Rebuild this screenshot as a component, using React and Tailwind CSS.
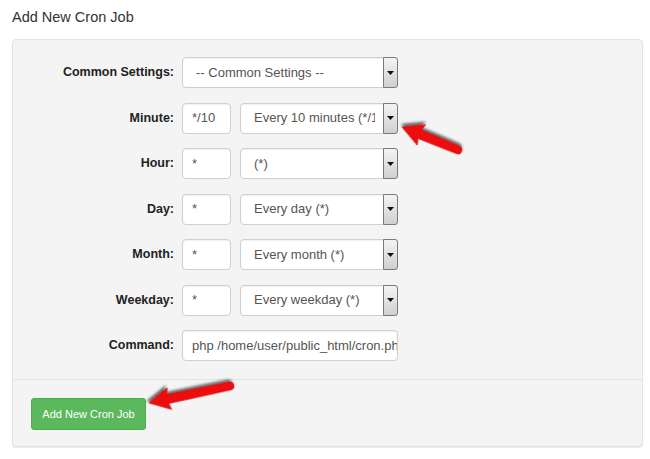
const rows = [
  { label: "Minute:", value: "*/10", option: "Every 10 minutes (*/10)" },
  { label: "Hour:", value: "*", option: "(*)" },
  { label: "Day:", value: "*", option: "Every day (*)" },
  { label: "Month:", value: "*", option: "Every month (*)" },
  { label: "Weekday:", value: "*", option: "Every weekday (*)" },
];

const SelectBox = ({ text, className }) => (
  <div
    className={`relative flex h-[31px] items-center rounded-[4px] border border-[#cfcfcf] bg-white pl-[13px] pr-[22px] shadow-[inset_0_1px_1px_rgba(0,0,0,0.06)] ${className}`}
  >
    <span className="min-w-0 flex-1 overflow-hidden whitespace-nowrap text-[13px] text-[#555]">
      {text}
    </span>
    <div className="absolute -right-px -top-px flex h-[31px] w-[15px] items-center justify-center rounded-r-[3px] border border-[#7a7a7a] bg-gradient-to-b from-[#f4f4f4] to-[#d0d0d0]">
      <svg width="7" height="4" viewBox="0 0 7 4">
        <polygon points="0,0 7,0 3.5,4" fill="#111" />
      </svg>
    </div>
  </div>
);

const TextBox = ({ value, className }) => (
  <div
    className={`flex h-[31px] items-center overflow-hidden whitespace-nowrap rounded-[4px] border border-[#cfcfcf] bg-white pl-[9px] text-[13px] text-[#555] shadow-[inset_0_1px_1px_rgba(0,0,0,0.06)] ${className}`}
  >
    {value}
  </div>
);

const Label = ({ children }) => (
  <div className="w-[169px] shrink-0 pr-[8px] text-right text-[12.5px] font-bold text-[#222]">
    {children}
  </div>
);

const RedArrow = ({ x1, y1, x2, y2, id }) => {
  const dx = x2 - x1;
  const dy = y2 - y1;
  const len = Math.sqrt(dx * dx + dy * dy);
  const angle = (Math.atan2(dy, dx) * 180) / Math.PI;
  return (
    <svg
      className="pointer-events-none absolute left-0 top-0"
      width="650"
      height="459"
      style={{ overflow: "visible" }}
    >
      <defs>
        <filter id={id} x="-50%" y="-50%" width="200%" height="200%">
          <feDropShadow dx="1.5" dy="2.5" stdDeviation="1.3" floodColor="#000" floodOpacity="0.6" />
        </filter>
      </defs>
      <g transform={`translate(${x1} ${y1}) rotate(${angle})`} filter={`url(#${id})`}>
        <path
          d={`M0,-4 L${len - 19},-4.5 L${len - 21},-11 L${len},0 L${len - 21},11 L${len - 19},4.5 L0,4 A4,4 0 0 1 0,-4 Z`}
          fill="#ee1111"
          stroke="#c80000"
          strokeWidth="0.6"
          strokeLinejoin="round"
        />
      </g>
    </svg>
  );
};

export default function App() {
  return (
    <div className="relative h-[459px] w-[650px] overflow-hidden bg-white font-['Liberation_Sans',Arial,sans-serif]">
      <h2 className="pl-[12px] pt-[8px] text-[14.5px] leading-[18px] text-[#333]">
        Add New Cron Job
      </h2>

      <div className="ml-[12px] mt-[13px] w-[631px] rounded-[4px] border border-[#e2e2e2] bg-[#f4f4f4] shadow-[0_1px_1px_rgba(0,0,0,0.08)]">
        <div className="flex flex-col gap-[14.5px] pb-[18px] pt-[17px]">
          <div className="flex items-center">
            <Label>Common Settings:</Label>
            <SelectBox text="-- Common Settings --" className="w-[216px]" />
          </div>
          {rows.map((r) => (
            <div key={r.label} className="flex items-center">
              <Label>{r.label}</Label>
              <TextBox value={r.value} className="w-[49px]" />
              <SelectBox text={r.option} className="ml-[9px] w-[158px]" />
            </div>
          ))}
          <div className="flex items-center">
            <Label>Command:</Label>
            <TextBox value="php /home/user/public_html/cron.php" className="w-[216px]" />
          </div>
        </div>

        <div className="border-t border-[#e2e2e2] px-[18px] pb-[16px] pt-[18px]">
          <button className="h-[32px] w-[115px] rounded-[3px] border border-[#4cae4c] bg-[#5cb85c] text-[11px] text-white">
            Add New Cron Job
          </button>
        </div>
      </div>

      <RedArrow id="a1" x1={458} y1={150} x2={402} y2={127} />
      <RedArrow id="a2" x1={230} y1={386} x2={149} y2={403} />
    </div>
  );
}
